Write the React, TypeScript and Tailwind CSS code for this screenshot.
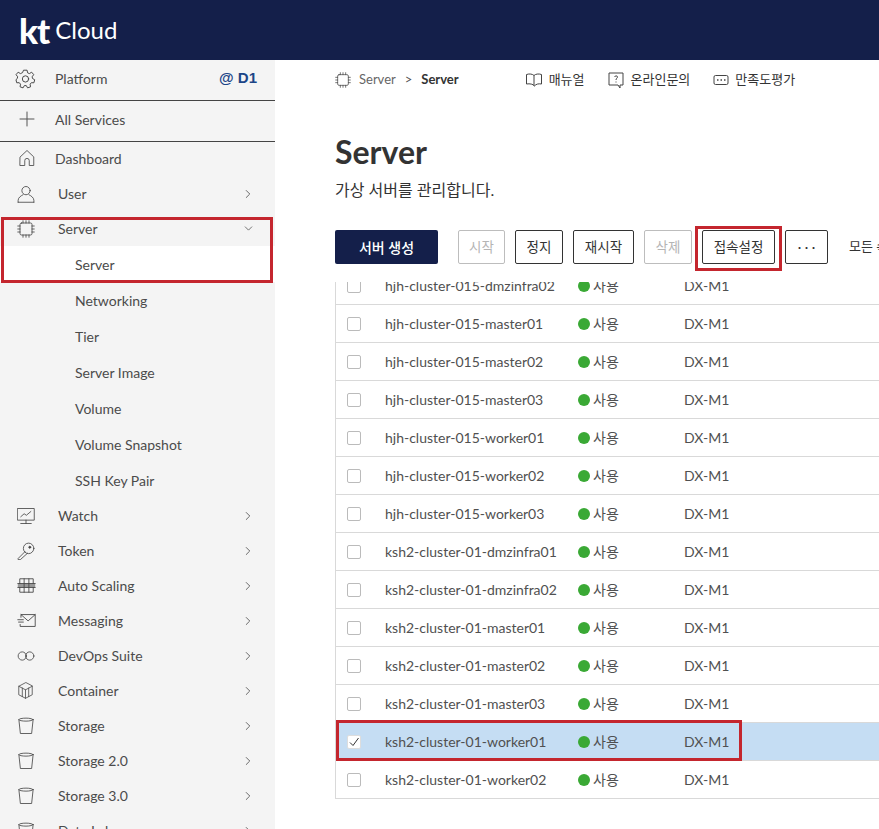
import { ChevronDown, ChevronRight, Plus } from "lucide-react";
import type { ReactNode } from "react";

const font = "font-['Lato','Noto_Sans_CJK_KR',sans-serif]";

function Icon({ children, w = 24 }: { children: ReactNode; w?: number }) {
  return (
    <svg width={w} height={w} viewBox="0 0 24 24" fill="none" stroke="#444" strokeWidth="1.1" strokeLinecap="round" strokeLinejoin="round">
      {children}
    </svg>
  );
}

const GearIcon = () => (
  <Icon w={21}>
    <path d="M10.2 2.5h3.6l.6 3 2 .9 2.600-1.600 2.400 2.800-1.800 2.400.4 2 2.500 1.400-.9 3.500-2.900-.1-1.400 1.700.5 3-3.400 1.200-1.500-2.600h-2.200l-1.500 2.600-3.400-1.200.5-3-1.400-1.700-2.900.1-.9-3.500L2.600 12l.4-2-1.800-2.400 2.400-2.800 2.600 1.600 2-.9z" />
    <circle cx="12" cy="12.5" r="3.6" />
  </Icon>
);
const HomeIcon = () => (
  <Icon w={18}>
    <path d="M3 10.500 12 2l9 8.500V22h-6v-6.500a3 3 0 0 0-6 0V22H3z" />
  </Icon>
);
const UserIcon = () => (
  <Icon w={18}>
    <circle cx="12" cy="7.500" r="5.500" />
    <path d="M1.500 23v-2.500c0-3.500 3.500-6 6.500-7.500M22.500 23v-2.500c0-3.500-3.500-6-6.500-7.500M1.500 23h21" />
  </Icon>
);
const ChipIcon = ({ w = 18 }: { w?: number }) => (
  <Icon w={w}>
    <rect x="4" y="4" width="16" height="16" rx="2" />
    <path d="M8 1v3M12 1v3M16 1v3M8 20v3M12 20v3M16 20v3M1 8h3M1 12h3M1 16h3M20 8h3M20 12h3M20 16h3" />
  </Icon>
);
const WatchIcon = () => (
  <Icon w={18}>
    <rect x="1" y="2" width="22" height="15.500" />
    <path d="M12 17.500V22M5 22h14M5 13l4.500-4 3 2 6-5" />
  </Icon>
);
const KeyIcon = () => (
  <Icon w={18}>
    <circle cx="15.500" cy="8.500" r="7" />
    <circle cx="17" cy="7" r="1.300" fill="#444" />
    <path d="M10.500 13 1.500 22v1.500h3L14 15" />
  </Icon>
);
const ScaleIcon = () => (
  <Icon w={19}>
    <rect x="1" y="9.500" width="22" height="5" fill="#999" stroke="none" />
    <path d="M3.500 9.500v-6h17v6M3.500 14.500v6h17v-6M1 9.500h22M1 14.500h22M9 3.500v17M15 3.500v17" />
  </Icon>
);
const MailIcon = () => (
  <Icon w={19}>
    <path d="M5 8V4.500h18v15H4V17M5 4.500l9 8 9-8M1 11h7M2 14h6" />
  </Icon>
);
const LoopIcon = () => (
  <Icon w={18}>
    <circle cx="7" cy="12" r="5.500" />
    <circle cx="17" cy="12" r="5.500" />
  </Icon>
);
const BoxIcon = () => (
  <Icon w={17}>
    <path d="M12 1 2.500 6v12L12 23l9.500-5V6zM2.500 6 12 11l9.500-5M12 11v12M7.500 8.500V20.500M16.500 8.500V20.500" />
  </Icon>
);
const BucketIcon = () => (
  <Icon w={18}>
    <ellipse cx="12" cy="3.500" rx="9.500" ry="2" />
    <path d="M2.500 3.500 4.500 22h15L21.500 3.500" />
  </Icon>
);

const services: [string, ReactNode][] = [
  ["Watch", <WatchIcon />],
  ["Token", <KeyIcon />],
  ["Auto Scaling", <ScaleIcon />],
  ["Messaging", <MailIcon />],
  ["DevOps Suite", <LoopIcon />],
  ["Container", <BoxIcon />],
  ["Storage", <BucketIcon />],
  ["Storage 2.0", <BucketIcon />],
  ["Storage 3.0", <BucketIcon />],
  ["Data Lake", <BucketIcon />],
];

const subMenu = ["Server", "Networking", "Tier", "Server Image", "Volume", "Volume Snapshot", "SSH Key Pair"];

const servers = [
  "hjh-cluster-015-dmzinfra02",
  "hjh-cluster-015-master01",
  "hjh-cluster-015-master02",
  "hjh-cluster-015-master03",
  "hjh-cluster-015-worker01",
  "hjh-cluster-015-worker02",
  "hjh-cluster-015-worker03",
  "ksh2-cluster-01-dmzinfra01",
  "ksh2-cluster-01-dmzinfra02",
  "ksh2-cluster-01-master01",
  "ksh2-cluster-01-master02",
  "ksh2-cluster-01-master03",
  "ksh2-cluster-01-worker01",
  "ksh2-cluster-01-worker02",
];

function NavRow({ icon, label, open }: { icon: ReactNode; label: string; open?: boolean }) {
  return (
    <div className="flex h-[35px] items-center pl-[17px] pr-[20px]">
      <span className="flex w-[41px] justify-start">{icon}</span>
      <span className="flex-1 text-[14px]">{label}</span>
      {open ? <ChevronDown size={13} strokeWidth={1.4} /> : <ChevronRight size={14} strokeWidth={1.4} />}
    </div>
  );
}

function Sidebar() {
  return (
    <aside className="relative h-full w-[275px] shrink-0 overflow-hidden bg-[#f4f4f4] text-[#4b4b4b]">
      <div className="flex h-[41px] items-center border-b border-[#444] pb-[4px] pl-[15px] pr-[18px]">
        <span className="w-[40px]"><GearIcon /></span>
        <span className="flex-1 text-[14px]">Platform</span>
        <span className="text-[15px] font-bold text-[#1c4587] font-['Liberation_Sans',sans-serif]">@ D1</span>
      </div>
      <div className="flex h-[41px] items-center border-b border-[#444] pb-[4px] pl-[15px]">
        <span className="w-[40px]"><Plus size={24} strokeWidth={1} color="#555" /></span>
        <span className="text-[14px]">All Services</span>
      </div>
      <div className="flex h-[34px] items-center pb-[2px] pl-[18px]">
        <span className="w-[37px]"><HomeIcon /></span>
        <span className="text-[14px]">Dashboard</span>
      </div>
      <NavRow icon={<UserIcon />} label="User" />
      <NavRow icon={<ChipIcon />} label="Server" open />
      <div>
        {subMenu.map((s, i) => (
          <div key={s} className={`flex h-[36px] items-center pl-[75px] text-[14px] ${i === 0 ? "bg-white" : ""}`}>
            {s}
          </div>
        ))}
      </div>
      {services.map(([label, icon]) => (
        <NavRow key={label} icon={icon} label={label} />
      ))}
      <div className="absolute left-[1px] top-[157px] h-[66px] w-[272px] border-[3px] border-[#c4262e]" />
    </aside>
  );
}

function ActionButton({ label, width, disabled }: { label: string; width: string; disabled?: boolean }) {
  return (
    <button
      className={`flex h-[34px] shrink-0 items-center justify-center rounded-[2px] border bg-white text-[13.5px] ${width} ${
        disabled ? "border-[#bdbdbd] text-[#b5b5b5]" : "border-[#333] text-[#333]"
      }`}
    >
      {label}
    </button>
  );
}

function ServerRow({ name, selected }: { name: string; selected: boolean }) {
  return (
    <div className={`flex h-[38px] shrink-0 items-center border-b border-[#d9d9d9] text-[14px] text-[#505050] ${selected ? "bg-[#c5ddf3]" : ""}`}>
      <span className={`ml-[11px] mr-[24px] flex h-[14px] w-[14px] items-center justify-center rounded-[2px] border bg-white ${selected ? "border-[#ddd]" : "border-[#bbb]"}`}>
        {selected && (
          <svg width="12" height="12" viewBox="0 0 12 12" fill="none" stroke="#333" strokeWidth="1">
            <path d="M2 6.500 5 9.500 10.500 2" />
          </svg>
        )}
      </span>
      <span className="w-[193px]">{name}</span>
      <span className="flex w-[106px] items-center gap-[3px]">
        <span className="h-[12px] w-[12px] rounded-full bg-[#3aa935]" />
        사용
      </span>
      <span>DX-M1</span>
    </div>
  );
}

export default function App() {
  return (
    <div className={`flex h-[829px] w-[879px] flex-col overflow-hidden bg-white ${font}`}>
      <header className="flex h-[60px] shrink-0 items-center bg-[#141f4a] pl-[19px] text-white">
        <span className="text-[35px] leading-none font-black tracking-[-1px]">kt</span>
        <span className="ml-[6px] text-[24px] leading-none">Cloud</span>
      </header>
      <div className="flex min-h-0 flex-1">
        <Sidebar />
        <main className="relative flex min-w-0 flex-1 flex-col pl-[60px] text-[#333]">
          <div className="flex h-[40px] shrink-0 items-center text-[13px]">
            <ChipIcon w={16} />
            <span className="ml-[8px] text-[#666]">Server</span>
            <span className="mx-[9px] text-[#555]">&gt;</span>
            <span className="font-bold">Server</span>
            <span className="ml-[66px] flex items-center gap-[6px]">
              <svg width="18" height="14" viewBox="0 0 17 14" fill="none" stroke="#444" strokeWidth="1">
                <path d="M1 1.500c3-1 6-.5 7.500 1 1.500-1.500 4.500-2 7.500-1V11c-3-.5-5.500 0-7 2-1.500-2-4.500-2.500-8-2zM8.500 2.500V13" />
              </svg>
              매뉴얼
            </span>
            <span className="ml-[23px] flex items-center gap-[7px]">
              <svg width="16" height="17" viewBox="0 0 16 17" fill="none" stroke="#444" strokeWidth="1">
                <path d="M1 1h14v12h-3v3l-2-3H1zM6.500 5c.5-1.500 3-1.500 3 0 0 1.200-1.500 1.200-1.500 3M8 9.500v1" />
              </svg>
              온라인문의
            </span>
            <span className="ml-[23px] flex items-center gap-[6px]">
              <svg width="16" height="12" viewBox="0 0 16 12" fill="none" stroke="#444" strokeWidth="1">
                <rect x="1" y="1.500" width="14" height="9" rx="1.500" />
                <path d="M4 6h1.500M7.500 6H9M11 6h1.500" strokeWidth="1.600" />
              </svg>
              만족도평가
            </span>
          </div>
          <h1 className="mt-[31px] text-[32px] leading-[42px] font-bold text-[#333]">Server</h1>
          <p className="mt-[7px] text-[16px] leading-[20px] text-[#333]">가상 서버를 관리합니다.</p>
          <div className="mt-[30px] flex h-[34px] shrink-0 items-center whitespace-nowrap">
            <button className="h-[34px] w-[103px] shrink-0 rounded-[2px] bg-[#141f4a] text-[14px] font-medium text-white">서버 생성</button>
            <div className="ml-[20px] flex shrink-0 gap-[10px]">
              <ActionButton label="시작" width="w-[47px]" disabled />
              <ActionButton label="정지" width="w-[48px]" />
              <ActionButton label="재시작" width="w-[61px]" />
              <ActionButton label="삭제" width="w-[48px]" disabled />
              <ActionButton label="접속설정" width="w-[73px]" />
              <ActionButton label="· · ·" width="w-[43px]" />
            </div>
            <span className="ml-[21px] shrink-0 text-[13px]">모든 속성</span>
          </div>
          <div className="mt-[18px] min-h-0 flex-1 overflow-hidden">
            <div className="-mt-[15px] flex w-[600px] flex-col border-l border-[#d9d9d9]">
              {servers.map((name) => (
                <ServerRow key={name} name={name} selected={name === "ksh2-cluster-01-worker01"} />
              ))}
            </div>
          </div>
          <div className="absolute left-[420px] top-[166px] h-[45px] w-[87px] border-[3px] border-[#c4262e]" />
          <div className="absolute left-[61px] top-[660px] h-[41px] w-[406px] border-[3px] border-[#c4262e]" />
        </main>
      </div>
    </div>
  );
}
